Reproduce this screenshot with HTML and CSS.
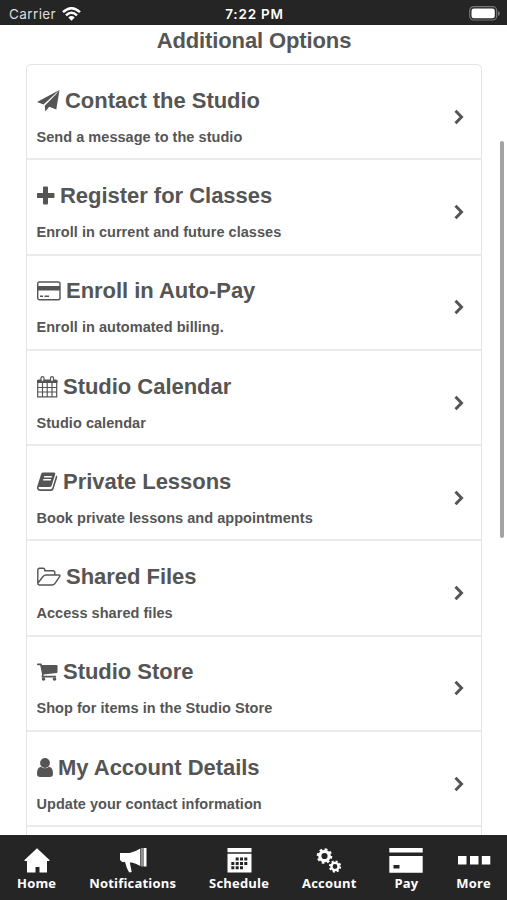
FILE: index.html
```
<!DOCTYPE html>
<html lang="en">
<head>
<meta charset="utf-8">
<title>Additional Options</title>
<link rel="stylesheet" href="styles.css">
</head>
<body>
<div class="app">
  <header class="status">
    <div class="carrier"><span>Carrier</span>
      <svg width="19" height="14" viewBox="0 0 19 14" fill="none" stroke="#fff" stroke-width="2.5"><path d="M1 5.2Q9.500-2.600 18 5.200M4 8.300Q9.500 3.300 15 8.300"/><path d="M6.300 10.400Q9.500 7.500 12.700 10.400L9.500 13.700z" fill="#fff" stroke="none"/></svg>
    </div>
    <div class="time">7:22 PM</div>
    <svg class="battery" width="31" height="15" viewBox="0 0 31 15"><rect x=".7" y=".7" width="27" height="13.300" rx="4" fill="none" stroke="#777" stroke-width="1.200"/><rect x="2.500" y="2.500" width="23.300" height="9.800" rx="2.300" fill="#fff"/><path d="M29 5v5q1.800-.8 1.800-2.500T29 5z" fill="#777"/></svg>
  </header>
  <main class="content">
    <h1>Additional Options</h1>
    <div class="list">
      <a class="row"><div class="text"><h2><svg width="23" height="22" viewBox="0 0 23 22"><path fill="#555" d="M22.500 0 6.500 14.600 0 12zM22.500 0 19.300 19.500 12.300 16.700 8.300 21.500 7.700 15.800 20 3.300 9.500 15.800z"/></svg><span>Contact the Studio</span></h2><p>Send a message to the studio</p></div><svg class="chev" width="10" height="16" viewBox="0 0 10 16"><path d="M1.500 1.800 7.500 8l-6 6.200"/></svg></a>
      <a class="row"><div class="text"><h2><svg width="18" height="22" viewBox="0 0 18 22"><path fill="#555" d="M7 1.500h3q1 0 1 1V8h5.500q1 0 1 1v3q0 1-1 1H11v5.500q0 1-1 1H7q-1 0-1-1V13H.800q-1 0-1-1V9q0-1 1-1H6V2.500q0-1 1-1z"/></svg><span>Register for Classes</span></h2><p>Enroll in current and future classes</p></div><svg class="chev" width="10" height="16" viewBox="0 0 10 16"><path d="M1.500 1.800 7.500 8l-6 6.200"/></svg></a>
      <a class="row"><div class="text"><h2><svg width="24" height="22" viewBox="0 0 24 22"><rect x=".7" y="2" width="22.300" height="17.800" rx="1.800" fill="none" stroke="#555" stroke-width="1.400"/><path fill="#555" d="M.7 6h22.300v4.500H.7zM3 15.500h3v1.400H3zm4.500 0H12v1.400H7.500z"/></svg><span>Enroll in Auto-Pay</span></h2><p>Enroll in automated billing.</p></div><svg class="chev" width="10" height="16" viewBox="0 0 10 16"><path d="M1.500 1.800 7.500 8l-6 6.200"/></svg></a>
      <a class="row"><div class="text"><h2><svg width="21" height="22" viewBox="0 0 21 22"><path d="M.7 4.500h19v16.300H.7zM5.500 7v14M10.200 7v14M15 7v14M1 11.500h19M1 16h19" fill="none" stroke="#555" stroke-width="1.200"/><path d="M0 7V5q0-1.500 1.500-1.500h17.500Q20.500 3.500 20.500 5v2z" fill="#555"/><rect x="4" y=".6" width="3" height="5" rx="1.500" fill="#fff" stroke="#555" stroke-width="1.200"/><rect x="13.500" y=".6" width="3" height="5" rx="1.500" fill="#fff" stroke="#555" stroke-width="1.200"/></svg><span>Studio Calendar</span></h2><p>Studio calendar</p></div><svg class="chev" width="10" height="16" viewBox="0 0 10 16"><path d="M1.500 1.800 7.500 8l-6 6.200"/></svg></a>
      <a class="row"><div class="text"><h2><svg width="21" height="22" viewBox="0 0 21 22"><path fill="#555" fill-rule="evenodd" d="M5.700 1.500H17q1.700 0 1.200 1.700l-3.500 11.300q-.5 1.500-2.200 1.500H2.200q-1 .1-.7 1 .4 1.200 2 1.200h10.300q1.100 0 1.500-1.100L19.100 4.600q1.500.5 1 2.100L16.600 18q-.6 2-2.600 2H3.300Q.8 20 .1 17.800q-.3-1.300.1-2.300L4 3.500q.5-2 1.700-2zM7.300 5 6.900 6.400h7.700L15 5zM6.400 8 6 9.400h7.700l.4-1.400z"/></svg><span>Private Lessons</span></h2><p>Book private lessons and appointments</p></div><svg class="chev" width="10" height="16" viewBox="0 0 10 16"><path d="M1.500 1.800 7.500 8l-6 6.200"/></svg></a>
      <a class="row"><div class="text"><h2><svg width="24" height="22" viewBox="0 0 24 22"><path d="M.8 17.300V4Q.8 2.200 2.600 2.200H6Q7.800 2.200 7.800 4v.7H16Q17.800 4.700 17.800 6.500V9M.8 17.300 6 10.500Q7.200 9 9 9h13q1.600.1.600 1.600L18 17.300q-1 1.700-3 1.700H2.600Q.8 19 .8 17.300z" fill="none" stroke="#555" stroke-width="1.400"/></svg><span>Shared Files</span></h2><p>Access shared files</p></div><svg class="chev" width="10" height="16" viewBox="0 0 10 16"><path d="M1.500 1.800 7.500 8l-6 6.200"/></svg></a>
      <a class="row"><div class="text"><h2><svg width="21" height="22" viewBox="0 0 21 22"><path fill="#555" d="M.8 2.500h3q1 0 1.200 1.400h14.500q1 0 1 1v6q0 .9-.9 1L6.700 13.400l-.3 1.400h12q.8 0 .8.800t-.8.800H5.500q-1.200 0-1-1l.6-2L3.200 4.200H.8Q0 4.200 0 3.300q0-.8.800-.8z"/><circle cx="6.500" cy="18" r="1.800" fill="#555"/><circle cx="17.500" cy="18" r="1.800" fill="#555"/></svg><span>Studio Store</span></h2><p>Shop for items in the Studio Store</p></div><svg class="chev" width="10" height="16" viewBox="0 0 10 16"><path d="M1.500 1.800 7.500 8l-6 6.200"/></svg></a>
      <a class="row"><div class="text"><h2><svg width="16" height="22" viewBox="0 0 16 22"><circle cx="8" cy="6" r="4.900" fill="#555"/><path fill="#555" d="M3.900 9.700Q8 13 12.100 9.700q3.900.6 3.900 7 0 3.300-3.200 3.300H3.200Q0 20 0 16.700q0-6.400 3.900-7z"/></svg><span>My Account Details</span></h2><p>Update your contact information</p></div><svg class="chev" width="10" height="16" viewBox="0 0 10 16"><path d="M1.500 1.800 7.500 8l-6 6.200"/></svg></a>
      <div class="row"></div>
    </div>
    <div class="scrollbar"></div>
  </main>
  <nav class="tabs">
    <a class="home"><svg width="26" height="26" viewBox="0 0 26 26"><path fill="#fff" d="M13 .3 25.500 12v1H23v11.500h-7.500V19h-4v5.500H3V13H.5v-1z"/></svg><span>Home</span></a>
    <a class="notifications"><svg width="28" height="26" viewBox="0 0 28 26"><path fill="#fff" d="M1 5h9.500Q16 4 21.300.5V18q-4.800-3-8.500-3.500l-2 .1 1.900 9.400-2.200.5q-1.500-1.500-2.800-5L6 14H3.200L1 12zM22.500 0h1v18.500h-1zM24.500 0h3v18.500h-3z"/></svg><span>Notifications</span></a>
    <a class="schedule"><svg width="25" height="26" viewBox="0 0 25 26"><path fill="#fff" d="M.5 0h24v4.300H.5zM.5 5.800h24v18.700H.5z"/><path fill="#252525" d="M8.700 9.500h3v3h-3zm4.300 0h3v3h-3zm4.300 0h3v3h-3zM4.300 13.900h3v3h-3zm4.400 0h3v3h-3zm4.300 0h3v3h-3zm4.300 0h3v3h-3zM4.300 18.300h3v3h-3zm4.400 0h3v3h-3zm4.300 0h3v3h-3z"/></svg><span>Schedule</span></a>
    <a class="account"><svg width="26" height="26" viewBox="0 0 26 26" fill="none" stroke="#fff"><circle cx="8.500" cy="8" r="4.700" stroke-width="3.200"/><circle cx="8.500" cy="8" r="6.700" stroke-width="2.200" stroke-dasharray="2.700 2.560"/><circle cx="19" cy="18.500" r="3.600" stroke-width="2.400"/><circle cx="19" cy="18.500" r="5.200" stroke-width="1.900" stroke-dasharray="2.100 1.984"/></svg><span>Account</span></a>
    <a class="pay"><svg width="34" height="26" viewBox="0 0 34 26"><path fill="#fff" fill-rule="evenodd" d="M.3 0h33.400v4.500H.3zM.3 8h33.400v16.700H.3zM4.500 17v3.500h6V17z"/></svg><span>Pay</span></a>
    <a class="more"><svg width="34" height="26" viewBox="0 0 34 26"><path fill="#fff" d="M1 8h8.500v8.500H1zm12 0h8.500v8.500H13zm11.800 0h8.500v8.500h-8.500z"/></svg><span>More</span></a>
  </nav>
</div>
</body>
</html>
```
FILE: styles.css
```
* { box-sizing: border-box; }
body { margin: 0; background: #fff; }
.app { height: 900px; display: flex; flex-direction: column; overflow: hidden; font-family: "Liberation Sans", Arial, sans-serif; color: #555; }
.status { flex: none; height: 25px; padding: 2px 7px 0 9px; background: #252525; color: #fff; display: grid; grid-template-columns: 1fr auto 1fr; align-items: center; font: 500 13.5px Inter, sans-serif; }
.carrier { display: flex; align-items: center; gap: 6px; font-weight: 400; letter-spacing: .4px; color: #ddd; }
.time { font-weight: 600; letter-spacing: .8px; }
.battery { justify-self: end; }
.content { flex: 1; min-height: 0; overflow: hidden; position: relative; padding: 0 25px 0 26px; }
h1 { margin: 2px 0 9px; font-size: 22px; line-height: 28px; text-align: center; letter-spacing: -.12px; }
.list { border: 1.300px solid #e4e4e4; border-radius: 5px 5px 0 0; }
.row { display: flex; align-items: center; justify-content: space-between; height: 95.300px; padding: 0 17px 0 9.500px; border-bottom: 2px solid #ebebeb; }
.text { padding-top: 11px; }
h2 { display: flex; align-items: center; gap: 5.500px; margin: 0; height: 26px; font-size: 22px; line-height: 26px; letter-spacing: -.03px; white-space: nowrap; }
h2 svg { flex: none; }
p { margin: 13px 0 0; font-size: 14.500px; line-height: 20px; font-weight: 700; letter-spacing: .04px; white-space: nowrap; }
.chev { margin-top: 10px; fill: none; stroke: #555; stroke-width: 3; }
.scrollbar { position: absolute; top: 116px; right: 3px; width: 4px; height: 397px; border-radius: 2px; background: #a3a3a3; }
.tabs { flex: none; height: 65px; padding: 13px 16px 0 17px; background: #252525; color: #fff; display: flex; justify-content: space-between; font: 700 13px "Open Sans", sans-serif; letter-spacing: .2px; }
.tabs a { display: flex; flex-direction: column; align-items: center; }
.tabs span { line-height: 18px; }
```
